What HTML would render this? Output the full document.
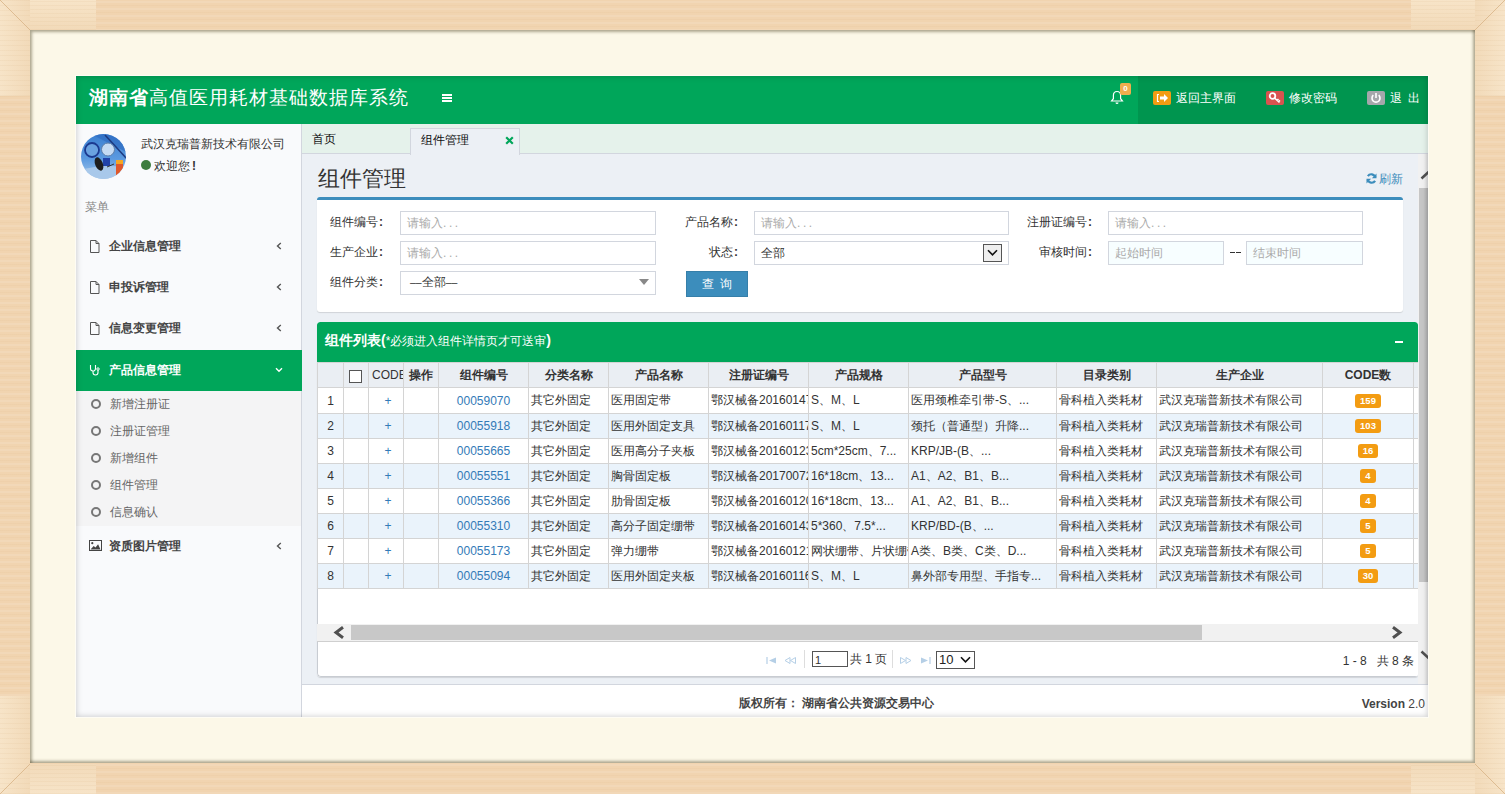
<!DOCTYPE html>
<html><head><meta charset="utf-8">
<style>
*{box-sizing:border-box}
html,body{margin:0;padding:0;width:1505px;height:794px;overflow:hidden;font-family:"Liberation Sans",sans-serif;font-size:12px;color:#333}
body{position:relative;background:#f1d4b0;
background-image:repeating-linear-gradient(0deg,rgba(255,255,255,0.10) 0 2px,rgba(255,255,255,0) 2px 4px,rgba(200,150,90,0.06) 4px 5px,rgba(255,255,255,0) 5px 7px)}
.j{display:inline-block;white-space:nowrap;text-align-last:justify;text-align:justify}
.abs{position:absolute}
#cream{left:30px;top:30px;width:1445px;height:733px;background:#fcf8e8;box-shadow:inset 2px 2px 3px rgba(80,70,40,0.45),inset -2px -2px 3px rgba(80,70,40,0.45)}
#app{left:76px;top:76px;width:1352px;height:641px;background:#ecf0f5;overflow:hidden;box-shadow:0 0 0 1px rgba(255,255,255,0.5)}
#shade{left:0;top:0;width:1352px;height:641px;box-shadow:inset 0 0 6px rgba(0,0,0,0.22);pointer-events:none}
#hdr{left:0;top:0;width:1352px;height:48px;background:#00a65a}
#hdr .title{left:13px;top:9px;font-size:19px;color:#fff;line-height:26px;white-space:nowrap;letter-spacing:1px}
#hdr .dark{left:1062px;top:0;width:290px;height:48px;background:#00954f}
#side{left:0;top:48px;width:226px;height:593px;background:#f9fafc;border-right:1px solid #d2d6de}
#content{left:226px;top:48px;width:1126px;height:560px;background:#ecf0f5}
#tabs{left:0;top:0;width:1126px;height:30px;background:#e5f2eb;border-bottom:1px solid #d2d6de}
#foot{left:226px;top:608px;width:1126px;height:33px;background:#fff;border-top:1px solid #d2d6de}
.box{background:#fff;border-radius:3px;box-shadow:0 1px 1px rgba(0,0,0,0.12)}
input,select{font-family:inherit}
.inp{position:absolute;height:24px;border:1px solid #d2d6de;background:#fff;color:#aaa;font-size:12px;line-height:22px;padding-left:6px;white-space:nowrap}
.lbl{position:absolute;font-size:12px;color:#333;line-height:14px;white-space:nowrap;text-align:right}
table.grid{border-collapse:collapse;table-layout:fixed;position:absolute;left:0px;top:40px}
table.grid td,table.grid th{border:1px solid #d4d4d4;height:25px;padding:0 2px;font-size:12px;white-space:nowrap;overflow:hidden;text-overflow:clip;color:#333}
table.grid th{background:#eaeef3;font-weight:bold;text-align:center}
table.grid tr.alt td{background:#eaf3fb}
.lnk{color:#337ab7}
.badge{display:inline-block;background:#f39c12;color:#fff;font-weight:bold;font-size:9.5px;line-height:14px;height:14px;padding:0 5px;border-radius:3px;vertical-align:middle}
</style></head><body>

<div class="abs" style="left:0;top:0;width:96px;height:30px;background:repeating-linear-gradient(0deg,rgba(210,170,120,0.10) 0 1px,rgba(255,255,255,0) 1px 4px),linear-gradient(180deg,#f7e4c8,#f2dab9)"></div>
<div class="abs" style="left:0;top:0;width:30px;height:96px;background:repeating-linear-gradient(0deg,rgba(210,170,120,0.10) 0 1px,rgba(255,255,255,0) 1px 5px),linear-gradient(90deg,#f7e4c8,#f2dab9)"></div>
<div class="abs" style="left:1411px;top:0;width:94px;height:30px;background:repeating-linear-gradient(0deg,rgba(210,170,120,0.10) 0 1px,rgba(255,255,255,0) 1px 4px),linear-gradient(180deg,#f7e4c8,#f2dab9)"></div>
<div class="abs" style="left:1475px;top:0;width:30px;height:96px;background:repeating-linear-gradient(0deg,rgba(210,170,120,0.10) 0 1px,rgba(255,255,255,0) 1px 5px),linear-gradient(90deg,#f2dab9,#f7e4c8)"></div>
<div class="abs" style="left:0;top:764px;width:96px;height:30px;background:repeating-linear-gradient(0deg,rgba(210,170,120,0.10) 0 1px,rgba(255,255,255,0) 1px 4px),linear-gradient(180deg,#f2dab9,#f7e4c8)"></div>
<div class="abs" style="left:0;top:696px;width:30px;height:98px;background:repeating-linear-gradient(0deg,rgba(210,170,120,0.10) 0 1px,rgba(255,255,255,0) 1px 5px),linear-gradient(90deg,#f7e4c8,#f2dab9)"></div>
<div class="abs" style="left:1411px;top:764px;width:94px;height:30px;background:repeating-linear-gradient(0deg,rgba(210,170,120,0.10) 0 1px,rgba(255,255,255,0) 1px 4px),linear-gradient(180deg,#f2dab9,#f7e4c8)"></div>
<div class="abs" style="left:1475px;top:696px;width:30px;height:98px;background:repeating-linear-gradient(0deg,rgba(210,170,120,0.10) 0 1px,rgba(255,255,255,0) 1px 5px),linear-gradient(90deg,#f2dab9,#f7e4c8)"></div>
<svg class="abs" style="left:0;top:0" width="1505" height="794"><g stroke="#d9b487" stroke-width="1" opacity="0.8"><path d="M0 0L30 30M1505 0L1475 30M0 794L30 764M1505 794L1475 764"></path></g></svg>
<div id="cream" class="abs"></div>
<div id="app" class="abs">
  <div id="hdr" class="abs">
    <div class="title abs"><b><span class="j" style="width: 60px;">湖南省</span></b><span class="j" style="width: 260px;">高值医用耗材基础数据库系统</span></div>
    <div class="dark abs"></div>
    <div class="abs" style="left:366px;top:18px;width:10px;height:2px;background:#fff;box-shadow:0 3px 0 #fff,0 6px 0 #fff"></div>
    <svg class="abs" style="left:1034px;top:14px" width="14" height="15" viewBox="0 0 14 15"><path d="M7 1.5c-2.3 0-3.6 1.8-3.6 4v3.2L1.6 11h10.8l-1.8-2.3V5.5c0-2.2-1.3-4-3.6-4z" fill="none" stroke="#fff" stroke-width="1.2"></path><path d="M5.5 12.5a1.5 1.5 0 0 0 3 0z" fill="#fff"></path></svg>
    <div class="abs" style="left:1044px;top:7px;width:11px;height:12px;background:#f0ad4e;border-radius:2px;color:#fff;font-size:8px;font-weight:bold;line-height:12px;text-align:center">0</div>
    <div class="abs" style="left:1077px;top:15px;width:18px;height:14px;background:#f39c12;border-radius:2px"></div>
    <svg class="abs" style="left:1077px;top:15px" width="18" height="14" viewBox="0 0 18 14"><path d="M6 3.5H4.5v7H6" fill="none" stroke="#fff" stroke-width="1.2"></path><path d="M7 5.5h4V3l4 4-4 4V8.5H7z" fill="#fff"></path></svg>
    <div class="abs" style="left:1100px;top:15px;color:#fff;font-size:12px;line-height:14px;white-space:nowrap"><span class="j" style="width: 60px;">返回主界面</span></div>
    <div class="abs" style="left:1190px;top:15px;width:18px;height:14px;background:#d9534f;border-radius:2px"></div>
    <svg class="abs" style="left:1190px;top:15px" width="18" height="14" viewBox="0 0 18 14"><circle cx="6.5" cy="5" r="2.8" fill="none" stroke="#fff" stroke-width="1.8"></circle><path d="M8.5 7l5 4.5M11 9.3l1.5-1.3M12.5 10.6l1.5-1.3" stroke="#fff" stroke-width="1.6"></path></svg>
    <div class="abs" style="left:1213px;top:15px;color:#fff;font-size:12px;line-height:14px;white-space:nowrap"><span class="j" style="width: 48px;">修改密码</span></div>
    <div class="abs" style="left:1291px;top:15px;width:18px;height:14px;background:#a5a7ab;border-radius:2px"></div>
    <svg class="abs" style="left:1291px;top:15px" width="18" height="14" viewBox="0 0 18 14"><path d="M6.3 4.2A4 4 0 1 0 11.7 4.2" fill="none" stroke="#fff" stroke-width="1.6"></path><path d="M9 2v5" stroke="#fff" stroke-width="1.6"></path></svg>
    <div class="abs" style="left:1314px;top:15px;color:#fff;font-size:12px;line-height:14px;white-space:nowrap;letter-spacing:6px"><span class="j" style="width: 36px;">退出</span></div>

  </div>
  <div id="side" class="abs">
  <svg class="abs" style="left:5px;top:10px" width="45" height="45" viewBox="0 0 45 45">
  <defs><clipPath id="avc"><circle cx="22.5" cy="22.5" r="22.5"></circle></clipPath>
  <linearGradient id="avg" x1="0" y1="0" x2="0" y2="1"><stop offset="0" stop-color="#3b7fd0"></stop><stop offset="0.55" stop-color="#5b9ae0"></stop><stop offset="1" stop-color="#a6c7ea"></stop></linearGradient></defs>
  <g clip-path="url(#avc)">
    <rect width="45" height="45" fill="url(#avg)"></rect>
    <path d="M10 0L45 18V0z" fill="#2f6cc2" opacity="0.7"></path>
    <path d="M24 1L46 25" stroke="#1d3a80" stroke-width="1.6"></path>
    <path d="M0 36Q20 30 45 33V45H0z" fill="#a8c8ea"></path>
    <circle cx="11" cy="16" r="7" fill="#6aa2e0" stroke="#1b3a90" stroke-width="1.8"></circle>
    <circle cx="27" cy="15.5" r="6.5" fill="#c5dbf3" stroke="#5f7fa8" stroke-width="1"></circle>
    <rect x="22" y="24" width="7" height="8" fill="#2142a8"></rect>
    <ellipse cx="18" cy="30" rx="3.8" ry="7" transform="rotate(-22 18 30)" fill="#1e1e1e"></ellipse>
    <path d="M26 33l7-3" stroke="#333" stroke-width="1"></path>
    <rect x="35" y="26" width="7" height="16" fill="#e0582a"></rect>
    <rect x="35" y="26" width="7" height="4" fill="#f5a623"></rect>
  </g>
</svg>
  <div class="abs" style="left:65px;top:13px;font-size:12px;line-height:14px;color:#333;white-space:nowrap"><span class="j" style="width: 144px;">武汉克瑞普新技术有限公司</span></div>
  <div class="abs" style="left:65px;top:36px;width:10px;height:10px;border-radius:50%;background:#3d7d3f"></div>
  <div class="abs" style="left:78px;top:35px;font-size:12px;line-height:14px;color:#333;white-space:nowrap"><span class="j" style="width: 36px;">欢迎您</span><span style="margin-left:2px;font-weight:bold">!</span></div>
  <div class="abs" style="left:9px;top:76px;font-size:12px;line-height:14px;color:#888;white-space:nowrap"><span class="j" style="width: 24px;">菜单</span></div>
<svg class="abs" style="left:13px;top:116px" width="11" height="13" viewBox="0 0 11 13"><path d="M1.5 0.5h5.5l3 3v9h-8.5z M7 0.5v3h3" fill="none" stroke="#555" stroke-width="1"></path></svg><div class="abs" style="left:33px;top:115px;font-size:12px;line-height:14px;font-weight:bold;color:#444;white-space:nowrap"><span class="j" style="width: 72px;">企业信息管理</span></div><svg class="abs" style="left:200px;top:118px" width="6" height="8" viewBox="0 0 6 8"><path d="M4.8 1L1.5 4l3.3 3" fill="none" stroke="#555" stroke-width="1.4"></path></svg><svg class="abs" style="left:13px;top:157px" width="11" height="13" viewBox="0 0 11 13"><path d="M1.5 0.5h5.5l3 3v9h-8.5z M7 0.5v3h3" fill="none" stroke="#555" stroke-width="1"></path></svg><div class="abs" style="left:33px;top:156px;font-size:12px;line-height:14px;font-weight:bold;color:#444;white-space:nowrap"><span class="j" style="width: 60px;">申投诉管理</span></div><svg class="abs" style="left:200px;top:159px" width="6" height="8" viewBox="0 0 6 8"><path d="M4.8 1L1.5 4l3.3 3" fill="none" stroke="#555" stroke-width="1.4"></path></svg><svg class="abs" style="left:13px;top:198px" width="11" height="13" viewBox="0 0 11 13"><path d="M1.5 0.5h5.5l3 3v9h-8.5z M7 0.5v3h3" fill="none" stroke="#555" stroke-width="1"></path></svg><div class="abs" style="left:33px;top:197px;font-size:12px;line-height:14px;font-weight:bold;color:#444;white-space:nowrap"><span class="j" style="width: 72px;">信息变更管理</span></div><svg class="abs" style="left:200px;top:200px" width="6" height="8" viewBox="0 0 6 8"><path d="M4.8 1L1.5 4l3.3 3" fill="none" stroke="#555" stroke-width="1.4"></path></svg>
  <div class="abs" style="left:0;top:226px;width:226px;height:41px;background:#00a65a"></div>
  <svg class="abs" style="left:13px;top:240px" width="11" height="12" viewBox="0 0 11 12"><path d="M1.5 1v3.5a2.5 2.5 0 0 0 5 0V1 M4 7v1.5a2.5 2.5 0 0 0 5 0V6" fill="none" stroke="#fff" stroke-width="1.1"></path><circle cx="9" cy="5" r="1.2" fill="none" stroke="#fff" stroke-width="1"></circle></svg>
  <div class="abs" style="left:33px;top:239px;font-size:12px;line-height:14px;font-weight:bold;color:#fff;white-space:nowrap"><span class="j" style="width: 72px;">产品信息管理</span></div>
  <svg class="abs" style="left:199px;top:243px" width="8" height="6" viewBox="0 0 8 6"><path d="M1 1.3l3 3 3-3" fill="none" stroke="#fff" stroke-width="1.4"></path></svg>
  <div class="abs" style="left:0;top:267px;width:225px;height:135px;background:#f4f4f5"></div>
<div class="abs" style="left:15px;top:275px;width:10px;height:10px;border-radius:50%;border:2px solid #777"></div><div class="abs" style="left:34px;top:273px;font-size:12px;line-height:14px;color:#666;white-space:nowrap"><span class="j" style="width: 60px;">新增注册证</span></div><div class="abs" style="left:15px;top:302px;width:10px;height:10px;border-radius:50%;border:2px solid #777"></div><div class="abs" style="left:34px;top:300px;font-size:12px;line-height:14px;color:#666;white-space:nowrap"><span class="j" style="width: 60px;">注册证管理</span></div><div class="abs" style="left:15px;top:329px;width:10px;height:10px;border-radius:50%;border:2px solid #777"></div><div class="abs" style="left:34px;top:327px;font-size:12px;line-height:14px;color:#666;white-space:nowrap"><span class="j" style="width: 48px;">新增组件</span></div><div class="abs" style="left:15px;top:356px;width:10px;height:10px;border-radius:50%;border:2px solid #777"></div><div class="abs" style="left:34px;top:354px;font-size:12px;line-height:14px;color:#666;white-space:nowrap"><span class="j" style="width: 48px;">组件管理</span></div><div class="abs" style="left:15px;top:383px;width:10px;height:10px;border-radius:50%;border:2px solid #777"></div><div class="abs" style="left:34px;top:381px;font-size:12px;line-height:14px;color:#666;white-space:nowrap"><span class="j" style="width: 48px;">信息确认</span></div><svg class="abs" style="left:13px;top:416px" width="13" height="11" viewBox="0 0 13 11"><rect x="0.5" y="0.5" width="12" height="10" fill="none" stroke="#444" stroke-width="1"></rect><circle cx="3.3" cy="3.2" r="1.1" fill="#444"></circle><path d="M1.5 9.5l3.2-3.5 1.8 1.6 2.6-3.4 2.4 5.3z" fill="#444"></path></svg><div class="abs" style="left:33px;top:415px;font-size:12px;line-height:14px;font-weight:bold;color:#444;white-space:nowrap"><span class="j" style="width: 72px;">资质图片管理</span></div><svg class="abs" style="left:200px;top:418px" width="6" height="8" viewBox="0 0 6 8"><path d="M4.8 1L1.5 4l3.3 3" fill="none" stroke="#555" stroke-width="1.4"></path></svg></div>
  <div id="content" class="abs">
    <div id="tabs" class="abs">
      <div class="abs" style="left:10px;top:8px;font-size:12px;line-height:14px;color:#111;white-space:nowrap"><span class="j" style="width: 24px;">首页</span></div>
      <div class="abs" style="left:108px;top:4px;width:110px;height:27px;background:#ecf0f5;border:1px solid #d2d6de;border-bottom:none">
        <div class="abs" style="left:10px;top:4px;font-size:12px;line-height:14px;color:#111;white-space:nowrap"><span class="j" style="width: 48px;">组件管理</span></div>
        <svg class="abs" style="left:94px;top:7px" width="9" height="9" viewBox="0 0 9 9"><path d="M1.2 1.2l6.6 6.6M7.8 1.2L1.2 7.8" stroke="#00a65a" stroke-width="2.2"></path></svg>
      </div>
    </div>
    <div class="abs" style="left:16px;top:42px;font-size:22px;line-height:26px;color:#333;white-space:nowrap"><span class="j" style="width: 88px;">组件管理</span></div>
    <svg class="abs" style="left:1064px;top:49px" width="11" height="11" viewBox="0 0 11 11"><path d="M9.3 4.2A4.1 4.1 0 0 0 1.9 3.2" fill="none" stroke="#3c8dbc" stroke-width="2.2"></path><path d="M10.5 0.6v4.6H5.9z" fill="#3c8dbc"></path><path d="M1.7 6.8A4.1 4.1 0 0 0 9.1 7.8" fill="none" stroke="#3c8dbc" stroke-width="2.2"></path><path d="M0.5 10.4V5.8h4.6z" fill="#3c8dbc"></path></svg>
    <div class="abs" style="left:1077px;top:48px;font-size:12px;line-height:14px;color:#3c8dbc;white-space:nowrap"><span class="j" style="width: 24px;">刷新</span></div>

    <div class="abs box" style="left:15px;top:73px;width:1086px;height:115px;border-top:3px solid #3c8dbc"></div>
<div class="lbl" style="left:28px;top:91px;text-align:left"><span class="j" style="width: 48px;">组件编号</span><span style="display:inline-block;margin-left:1px;font-weight:bold">:</span></div><div class="lbl" style="left:28px;top:121px;text-align:left"><span class="j" style="width: 48px;">生产企业</span><span style="display:inline-block;margin-left:1px;font-weight:bold">:</span></div><div class="lbl" style="left:28px;top:151px;text-align:left"><span class="j" style="width: 48px;">组件分类</span><span style="display:inline-block;margin-left:1px;font-weight:bold">:</span></div><div class="inp" style="left:98px;top:87px;width:256px;background:#fff;color:#aaa"><span class="j" style="width: 36px;">请输入</span><span style="letter-spacing:2.6px">...</span></div><div class="inp" style="left:98px;top:117px;width:256px;background:#fff;color:#aaa"><span class="j" style="width: 36px;">请输入</span><span style="letter-spacing:2.6px">...</span></div><div class="inp" style="left:98px;top:147px;width:256px;background:#fff;color:#333;padding-left:9px;line-height:21px"><span style="font-size:10.5px">––</span><span class="j" style="width: 24px;">全部</span><span style="font-size:10.5px">––</span></div><svg class="abs" style="left:337px;top:155px" width="10" height="6" viewBox="0 0 10 6"><path d="M0 0h10L5 6z" fill="#888"></path></svg><div class="lbl" style="left:336px;top:91px;width:100px"><span class="j" style="width: 48px;">产品名称</span><span style="display:inline-block;margin-left:1px;font-weight:bold">:</span></div><div class="lbl" style="left:336px;top:121px;width:100px"><span class="j" style="width: 24px;">状态</span><span style="display:inline-block;margin-left:1px;font-weight:bold">:</span></div><div class="inp" style="left:452px;top:87px;width:255px;background:#fff;color:#aaa"><span class="j" style="width: 36px;">请输入</span><span style="letter-spacing:2.6px">...</span></div><div class="inp" style="left:452px;top:117px;width:255px;background:#fff;color:#333"><span class="j" style="width: 24px;">全部</span></div><div class="abs" style="left:681px;top:120px;width:19px;height:18px;border:1px solid #555;background:#eee"></div><svg class="abs" style="left:685px;top:125px" width="11" height="8" viewBox="0 0 11 8"><path d="M1 1.2l4.5 4.6 4.5-4.6" fill="none" stroke="#111" stroke-width="1.6"></path></svg><div class="abs" style="left:384px;top:147px;width:62px;height:26px;background:#3c8dbc;border:1px solid #367fa9;color:#fff;font-size:12px;line-height:24px;text-align:center;letter-spacing:6px;padding-left:6px"><span class="j" style="width: 36px;">查询</span></div><div class="lbl" style="left:690px;top:91px;width:100px"><span class="j" style="width: 60px;">注册证编号</span><span style="display:inline-block;margin-left:1px;font-weight:bold">:</span></div><div class="lbl" style="left:690px;top:121px;width:100px"><span class="j" style="width: 48px;">审核时间</span><span style="display:inline-block;margin-left:1px;font-weight:bold">:</span></div><div class="inp" style="left:806px;top:87px;width:255px;background:#fff;color:#aaa"><span class="j" style="width: 36px;">请输入</span><span style="letter-spacing:2.6px">...</span></div><div class="inp" style="left:806px;top:117px;width:116px;background:#f7feff;color:#aaa"><span class="j" style="width: 48px;">起始时间</span></div><div class="inp" style="left:944px;top:117px;width:117px;background:#f7feff;color:#aaa"><span class="j" style="width: 48px;">结束时间</span></div><div class="abs" style="left:928px;top:128px;width:5px;height:1px;background:#333;box-shadow:6px 0 0 #333"></div>
    <div class="abs box" style="left:15px;top:198px;width:1101px;height:355px;overflow:hidden;border-radius:3px 3px 3px 4px"><div class="abs" style="left:0;top:40px;width:1101px;height:315px;border-left:1px solid #c8ccd2;border-bottom:1px solid #c8ccd2;border-radius:0 0 0 4px"></div>
      <div class="abs" style="left:0;top:0;width:1101px;height:40px;background:#00a65a;border-radius:3px 3px 0 0"></div>
      <div class="abs" style="left:8px;top:10px;color:#fff;white-space:nowrap;line-height:16px"><b style="font-size:14px"><span class="j" style="width: 60.67px;">组件列表(</span></b><span style="font-size:12px"><span class="j" style="width: 160.67px;">*必须进入组件详情页才可送审</span></span><b style="font-size:14px">)</b></div>
      <div class="abs" style="left:1078px;top:19px;width:8px;height:2px;background:#fff"></div>
<table class="grid" style="width:1216px"><colgroup><col style="width:26px"><col style="width:25px"><col style="width:35px"><col style="width:35px"><col style="width:90px"><col style="width:80px"><col style="width:100px"><col style="width:100px"><col style="width:100px"><col style="width:148px"><col style="width:100px"><col style="width:166px"><col style="width:91px"><col style="width:120px"></colgroup><tbody><tr><th></th><th><span style="display:inline-block;width:13px;height:13px;border:1px solid #555;background:#fff;vertical-align:middle;position:relative;left:-1px;top:1px"></span></th><th><span style="display:block;text-align:left;font-weight:normal;margin-left:1px">CODE</span></th><th><span class="j" style="width: 24px;">操作</span></th><th><span class="j" style="width: 48px;">组件编号</span></th><th><span class="j" style="width: 48px;">分类名称</span></th><th><span class="j" style="width: 48px;">产品名称</span></th><th><span class="j" style="width: 60px;">注册证编号</span></th><th><span class="j" style="width: 48px;">产品规格</span></th><th><span class="j" style="width: 48px;">产品型号</span></th><th><span class="j" style="width: 48px;">目录类别</span></th><th><span class="j" style="width: 48px;">生产企业</span></th><th><span class="j" style="width: 46.67px;">CODE数</span></th><th></th></tr><tr style="height:26px"><td style="text-align:center;height:26px;padding-top:1px">1</td><td></td><td style="text-align:center" class="lnk"><span class="lnk" style="position:relative;left:2px">+</span></td><td></td><td style="text-align:center"><span class="lnk">00059070</span></td><td><span class="j" style="width: 60px;">其它外固定</span></td><td><span class="j" style="width: 60px;">医用固定带</span></td><td><span class="j" style="width: 101.39px;">鄂汉械备20160147</span></td><td><span class="j" style="width: 48.69px;">S、M、L</span></td><td><span class="j" style="width: 118.02px;">医用颈椎牵引带-S、...</span></td><td><span class="j" style="width: 84px;">骨科植入类耗材</span></td><td><span class="j" style="width: 144px;">武汉克瑞普新技术有限公司</span></td><td style="text-align:center"><span class="badge">159</span></td><td></td></tr><tr class="alt"><td style="text-align:center">2</td><td></td><td style="text-align:center" class="lnk"><span class="lnk" style="position:relative;left:2px">+</span></td><td></td><td style="text-align:center"><span class="lnk">00055918</span></td><td><span class="j" style="width: 60px;">其它外固定</span></td><td><span class="j" style="width: 84px;">医用外固定支具</span></td><td><span class="j" style="width: 100.5px;">鄂汉械备20160117</span></td><td><span class="j" style="width: 48.69px;">S、M、L</span></td><td><span class="j" style="width: 118.02px;">颈托（普通型）升降...</span></td><td><span class="j" style="width: 84px;">骨科植入类耗材</span></td><td><span class="j" style="width: 144px;">武汉克瑞普新技术有限公司</span></td><td style="text-align:center"><span class="badge">103</span></td><td></td></tr><tr><td style="text-align:center">3</td><td></td><td style="text-align:center" class="lnk"><span class="lnk" style="position:relative;left:2px">+</span></td><td></td><td style="text-align:center"><span class="lnk">00055665</span></td><td><span class="j" style="width: 60px;">其它外固定</span></td><td><span class="j" style="width: 84px;">医用高分子夹板</span></td><td><span class="j" style="width: 101.39px;">鄂汉械备20160123</span></td><td><span class="j" style="width: 85.36px;">5cm*25cm、7...</span></td><td><span class="j" style="width: 80.02px;">KRP/JB-(B、...</span></td><td><span class="j" style="width: 84px;">骨科植入类耗材</span></td><td><span class="j" style="width: 144px;">武汉克瑞普新技术有限公司</span></td><td style="text-align:center"><span class="badge">16</span></td><td></td></tr><tr class="alt"><td style="text-align:center">4</td><td></td><td style="text-align:center" class="lnk"><span class="lnk" style="position:relative;left:2px">+</span></td><td></td><td style="text-align:center"><span class="lnk">00055551</span></td><td><span class="j" style="width: 60px;">其它外固定</span></td><td><span class="j" style="width: 60px;">胸骨固定板</span></td><td><span class="j" style="width: 101.39px;">鄂汉械备20170072</span></td><td><span class="j" style="width: 82.72px;">16*18cm、13...</span></td><td><span class="j" style="width: 98.05px;">A1、A2、B1、B...</span></td><td><span class="j" style="width: 84px;">骨科植入类耗材</span></td><td><span class="j" style="width: 144px;">武汉克瑞普新技术有限公司</span></td><td style="text-align:center"><span class="badge">4</span></td><td></td></tr><tr><td style="text-align:center">5</td><td></td><td style="text-align:center" class="lnk"><span class="lnk" style="position:relative;left:2px">+</span></td><td></td><td style="text-align:center"><span class="lnk">00055366</span></td><td><span class="j" style="width: 60px;">其它外固定</span></td><td><span class="j" style="width: 60px;">肋骨固定板</span></td><td><span class="j" style="width: 101.39px;">鄂汉械备20160120</span></td><td><span class="j" style="width: 82.72px;">16*18cm、13...</span></td><td><span class="j" style="width: 98.05px;">A1、A2、B1、B...</span></td><td><span class="j" style="width: 84px;">骨科植入类耗材</span></td><td><span class="j" style="width: 144px;">武汉克瑞普新技术有限公司</span></td><td style="text-align:center"><span class="badge">4</span></td><td></td></tr><tr class="alt"><td style="text-align:center">6</td><td></td><td style="text-align:center" class="lnk"><span class="lnk" style="position:relative;left:2px">+</span></td><td></td><td style="text-align:center"><span class="lnk">00055310</span></td><td><span class="j" style="width: 60px;">其它外固定</span></td><td><span class="j" style="width: 84px;">高分子固定绷带</span></td><td><span class="j" style="width: 101.39px;">鄂汉械备20160143</span></td><td><span class="j" style="width: 74.72px;">5*360、7.5*...</span></td><td><span class="j" style="width: 82.69px;">KRP/BD-(B、...</span></td><td><span class="j" style="width: 84px;">骨科植入类耗材</span></td><td><span class="j" style="width: 144px;">武汉克瑞普新技术有限公司</span></td><td style="text-align:center"><span class="badge">5</span></td><td></td></tr><tr><td style="text-align:center">7</td><td></td><td style="text-align:center" class="lnk"><span class="lnk" style="position:relative;left:2px">+</span></td><td></td><td style="text-align:center"><span class="lnk">00055173</span></td><td><span class="j" style="width: 60px;">其它外固定</span></td><td><span class="j" style="width: 48px;">弹力绷带</span></td><td><span class="j" style="width: 101.39px;">鄂汉械备20160121</span></td><td><span class="j" style="width: 108px;">网状绷带、片状绷带</span></td><td><span class="j" style="width: 115.34px;">A类、B类、C类、D...</span></td><td><span class="j" style="width: 84px;">骨科植入类耗材</span></td><td><span class="j" style="width: 144px;">武汉克瑞普新技术有限公司</span></td><td style="text-align:center"><span class="badge">5</span></td><td></td></tr><tr class="alt"><td style="text-align:center">8</td><td></td><td style="text-align:center" class="lnk"><span class="lnk" style="position:relative;left:2px">+</span></td><td></td><td style="text-align:center"><span class="lnk">00055094</span></td><td><span class="j" style="width: 60px;">其它外固定</span></td><td><span class="j" style="width: 84px;">医用外固定夹板</span></td><td><span class="j" style="width: 100.5px;">鄂汉械备20160116</span></td><td><span class="j" style="width: 48.69px;">S、M、L</span></td><td><span class="j" style="width: 130.02px;">鼻外部专用型、手指专...</span></td><td><span class="j" style="width: 84px;">骨科植入类耗材</span></td><td><span class="j" style="width: 144px;">武汉克瑞普新技术有限公司</span></td><td style="text-align:center"><span class="badge">30</span></td><td></td></tr></tbody></table>
      <div class="abs" style="left:0px;top:302px;width:1101px;height:18px;background:#f1f1f1;border-bottom:1px solid #cfcfcf"></div>
      <div class="abs" style="left:34px;top:303px;width:851px;height:15px;background:#c8c8c8"></div>
      <svg class="abs" style="left:16px;top:304px" width="12" height="13" viewBox="0 0 12 13"><path d="M10 1.3L3 6.5l7 5.2" fill="none" stroke="#505050" stroke-width="3"></path></svg>
      <svg class="abs" style="left:1074px;top:304px" width="12" height="13" viewBox="0 0 12 13"><path d="M2 1.3L9 6.5l-7 5.2" fill="none" stroke="#505050" stroke-width="3"></path></svg>

      <svg class="abs" style="left:449px;top:335px" width="11" height="7" viewBox="0 0 11 7"><path d="M1 0v7" stroke="#b5cfe6" stroke-width="1.2"></path><path d="M10 0.5v6L3 3.5z" fill="#b5cfe6"></path></svg>
      <svg class="abs" style="left:467px;top:335px" width="12" height="7" viewBox="0 0 12 7"><path d="M6 0.5v6L1 3.5z M11.5 0.5v6L6.5 3.5z" fill="none" stroke="#b5cfe6" stroke-width="1"></path></svg>
      <div class="abs" style="left:487px;top:328px;width:1px;height:18px;background:#ddd"></div>
      <div class="abs" style="left:495px;top:329px;width:36px;height:16px;border:1px solid #555;background:#fff;font-size:11px;line-height:16px;padding-left:2px;color:#333">1</div>
      <div class="abs" style="left:533px;top:330px;font-size:12px;line-height:14px;color:#333;white-space:nowrap"><span class="j" style="width: 37.34px;">共 1 页</span></div>
      <div class="abs" style="left:575px;top:328px;width:1px;height:18px;background:#ddd"></div>
      <svg class="abs" style="left:583px;top:335px" width="12" height="7" viewBox="0 0 12 7"><path d="M0.5 0.5v6l5-3z M6 0.5v6l5-3z" fill="none" stroke="#b5cfe6" stroke-width="1"></path></svg>
      <svg class="abs" style="left:603px;top:335px" width="11" height="7" viewBox="0 0 11 7"><path d="M1 0.5v6L8 3.5z" fill="#b5cfe6"></path><path d="M10 0v7" stroke="#b5cfe6" stroke-width="1.2"></path></svg>
      <div class="abs" style="left:619px;top:329px;width:39px;height:18px;border:1px solid #555;background:#fff;font-size:13px;line-height:16px;padding-left:2px;color:#222">10</div>
      <svg class="abs" style="left:643px;top:334px" width="11" height="8" viewBox="0 0 11 8"><path d="M1 1.2l4.5 4.6 4.5-4.6" fill="none" stroke="#111" stroke-width="1.6"></path></svg>
      <div class="abs" style="left:1000px;top:332px;width:97px;font-size:12px;line-height:14px;color:#333;white-space:nowrap;text-align:right"><span class="j" style="width: 71.36px;">1 - 8 &nbsp; 共 8 条</span></div>
    </div>

    <div class="abs" style="left:1116px;top:30px;width:10px;height:530px;background:linear-gradient(90deg,#f1f1f1 60%,#dedede)"></div>
    <div class="abs" style="left:1117px;top:64px;width:9px;height:394px;background:linear-gradient(90deg,#c6c6c6 50%,#b0b0b0)"></div>
    <svg class="abs" style="left:1118px;top:46px" width="8" height="10" viewBox="0 0 8 10"><path d="M1.5 8.5l6.5-6 6.5 6" fill="none" stroke="#505050" stroke-width="2.6"></path></svg>
    <svg class="abs" style="left:1118px;top:526px" width="8" height="10" viewBox="0 0 8 10"><path d="M1.5 1.5l6.5 6 6.5-6" fill="none" stroke="#505050" stroke-width="2.6"></path></svg>
</div>
  <div id="foot" class="abs">
    <div class="abs" style="left:437px;top:11px;font-size:12px;line-height:14px;font-weight:bold;color:#444;white-space:nowrap"><span class="j" style="width: 195.34px;">版权所有： 湖南省公共资源交易中心</span></div>
    <div class="abs" style="left:1000px;top:12px;width:123px;text-align:right;font-size:12px;line-height:14px;color:#444;white-space:nowrap"><b>Version</b> 2.0</div>
  </div>
  <div id="shade" class="abs"></div>
</div>

</body></html>
